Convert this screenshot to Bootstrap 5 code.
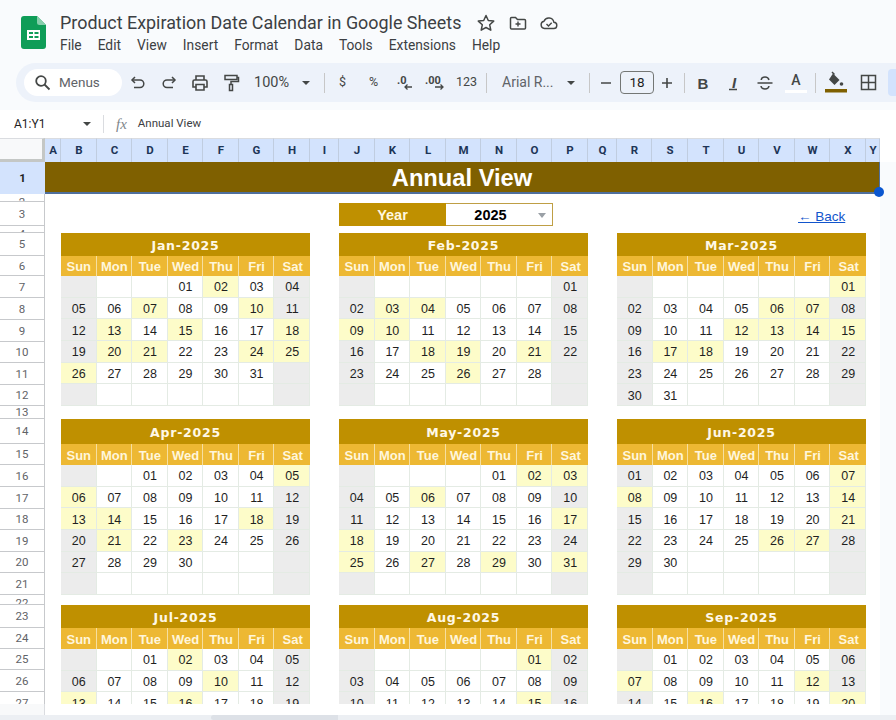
<!DOCTYPE html>
<html lang="en">
<head>
    <meta charset="UTF-8">
    <meta name="viewport" content="width=device-width, initial-scale=1.0">
    <title>Product Expiration Date Calendar in Google Sheets</title>
    <link rel="stylesheet" href="https://cdn.jsdelivr.net/npm/bootstrap@5.3.0/dist/css/bootstrap.min.css">
    <style>
        html, body { width: 896px; height: 720px; overflow: hidden; }
        body { background: #f9fbfd; font-family: Roboto, "Liberation Sans", sans-serif; color: #444746; }

        /* title and menu */
        .app-head { height: 63px; padding-left: 21px; }
        .doc-logo { width: 25px; height: 33px; margin-top: 16px; }
        .doc-info { margin-left: 14px; padding-top: 10px; }
        .doc-title { font-family: Roboto, sans-serif; font-size: 17.9px; line-height: 26px; color: #3c4043; white-space: nowrap; }
        .doc-icon { width: 20px; height: 20px; color: #444746; }
        .doc-icons { gap: 11.5px; margin-left: 15px; }
        .menu-row { font-family: Roboto, sans-serif; font-size: 13.8px; line-height: 18px; color: #3c4043; gap: 16px; white-space: nowrap; }

        /* toolbar */
        .tool-pill { height: 39px; margin-left: 16px; padding-left: 8px; background: #edf2fa; border-radius: 20px 0 0 20px; overflow: hidden; }
        .menu-search { width: 98px; height: 27px; flex: none; background: #fff; border-radius: 14px; font-size: 13.5px; color: #5f6368; padding-left: 10px; gap: 8px; }
        .tb { width: 31px; flex: none; color: #444746; font-size: 12.5px; text-align: center; }
        .tb svg { display: block; margin: auto; }
        .tb-sep { width: 1px; height: 20px; background: #c7c7c7; flex: none; }
        .tb-zoom { width: 42px; margin-left: 8px; font-size: 14.5px; flex: none; }
        .tb-caret { width: 0; height: 0; border-left: 4px solid transparent; border-right: 4px solid transparent; border-top: 4px solid #444746; margin: auto; display: block; }
        .tb-drop { width: 20px; flex: none; }
        .tb-drop-wide { width: 28px; flex: none; }
        .tb-font { width: 55px; margin-left: 15px; font-size: 14px; color: #5f6368; flex: none; white-space: nowrap; }
        .tb-size { width: 34px; height: 23px; border: 1px solid #747775; border-radius: 4px; font-size: 13.5px; line-height: 21px; text-align: center; color: #1f1f1f; flex: none; margin-left: -1px; }
        .tb-plus { width: 26px; flex: none; }
        .ms-sm1 { margin-left: 2px; }
        .ms-sm2 { margin-left: 4px; }
        .ms-sm3 { margin-left: 8px; }
        .tb-more { width: 20px; height: 27px; background: #d3e3fd; border-radius: 4px; margin-left: 4px; flex: none; }

        /* formula bar */
        .formula-bar { height: 28px; margin-top: 8px; background: #fff; }
        .name-box { width: 103px; padding-left: 14px; font-size: 12px; color: #1f1f1f; }
        .name-caret { margin: 0 12px 0 auto; }
        .formula-sep { width: 1px; height: 18px; background: #dadce0; }
        .fx-mark { font-family: "Liberation Serif", serif; font-style: italic; font-size: 15px; color: #80868b; margin: 0 11px 0 12px; }
        .formula-text { font-size: 11.5px; color: #3c4043; }

        /* column headers */
        .col-strip { height: 24px; background: #fff; }
        .corner-box { width: 45px; flex: none; background: #f8f9fa; border-right: 3px solid #c4c7c5; border-bottom: 3px solid #c4c7c5; border-top: 1px solid #dadce0; }
        .col-head { background: #d3e3fd; border-right: 1px solid #c0cde0; border-top: 1px solid #dadce0; padding-left: 1px; font-size: 11.5px; font-weight: 700; color: #1d3557; line-height: 22px; text-align: center; flex: none; }

        /* sheet body */
        .sheet-wrap { height: 542px; overflow: hidden; }
        .row-gutter { width: 45px; flex: none; }
        .row-head { font-size: 11.5px; padding-top: 2px; color: #5f6368; background: #fff; border-bottom: 1px solid #c7c9cc; border-right: 1px solid #c7c9cc; overflow: hidden; display: flex; align-items: center; justify-content: center; }
        .row-head.row-tiny { align-items: flex-start; padding-top: 0; }
        .row-head.row-active { background: #d3e3fd; color: #1f1f1f; font-weight: 700; border-right: none; border-bottom: none; }
        .sheet-main { width: 835px; flex: none; background: #fff; }
        .banner-row { height: 32px; background: #7f6000; border-bottom: 2px solid #4f6f9c; border-right: 1px solid #4f6f9c; color: #fff; font-family: "Liberation Sans", sans-serif; font-weight: 700; font-size: 23.7px; line-height: 32px; text-align: center; }
        .sel-dot { position: absolute; right: -5px; bottom: -5px; width: 10px; height: 10px; border-radius: 50%; background: #0b57d0; z-index: 2; }
        .year-row { height: 39px; padding-top: 9px; font-family: "Liberation Sans", sans-serif; }
        .year-label { width: 107px; height: 23px; margin-left: 294px; background: #bf9000; color: #fff7df; font-weight: 700; font-size: 14.5px; line-height: 25px; text-align: center; }
        .year-value { width: 107px; height: 23px; border: 1px solid #bf9f45; border-left: none; font-weight: 700; font-size: 14.5px; line-height: 23px; color: #000; text-align: center; padding-right: 17px; position: relative; }
        .year-caret { position: absolute; right: 6px; top: 9px; border-left: 4.5px solid transparent; border-right: 4.5px solid transparent; border-top: 5px solid #9aa0a6; }
        .back-link { margin-left: 245px; font-size: 13.5px; line-height: 27px; color: #1155cc; }

        .cal-grid { display: grid; grid-template-columns: repeat(3, 249px); column-gap: 29px; margin-left: 16px; font-family: "Liberation Sans", sans-serif; }
        .month-box { display: grid; grid-template-columns: repeat(7, 1fr); }
        .month-title { grid-column: 1 / -1; padding-top: 3px; background: #bf9000; color: #fff8e6; font-family: "DejaVu Sans", sans-serif; font-weight: 700; font-size: 12.5px; display: flex; align-items: center; justify-content: center; letter-spacing: .75px; }
        .week-cell { background: #edb833; color: #fff6dc; font-weight: 700; font-size: 13px; padding: 2px 0 0 1px; display: flex; align-items: center; justify-content: center; border-right: 1px solid #f6dfa0; }
        .week-cell:nth-child(8) { border-right: none; }
        .day-cell { height: 21.67px; padding: 3px 0 0 1px; display: flex; align-items: center; justify-content: center; font-size: 12.5px; color: #1f1f1f; border-right: 1px solid #e4ebe4; border-bottom: 1px solid #e4ebe4; }
        .day-cell.day-end { background: #ececec; }
        .day-cell.day-hit { background: #fdfcc9; }

        /* strip and scrollbar under the sheet */
        .under-strip { height: 11px; }
        .under-gutter { width: 45px; background: #f8f9fa; border-right: 1px solid #dadce0; flex: none; }
        .under-blank { width: 835px; background: #fff; flex: none; }
        .scroll-track { height: 5px; background: #eceff3; }
        .scroll-thumb { width: 127px; margin-left: 211px; background: #dde1e7; border-radius: 3px 0 0 3px; }
    </style>
</head>
<body>
    <!-- Title and menus -->
    <div class="app-head d-flex">
        <svg class="doc-logo" viewBox="0 0 25 33">
            <path d="M3 0h13l9 9v21a3 3 0 0 1-3 3H3a3 3 0 0 1-3-3V3a3 3 0 0 1 3-3z" fill="#0f9d58"/>
            <path d="M16 0l9 9h-6.500a2.500 2.500 0 0 1-2.500-2.500z" fill="#87ceac"/>
            <path d="M6 14h13v10H6z" fill="#fff"/>
            <path d="M8 16h4v2h-4zM13.500 16h4v2h-4zM8 20h4v2h-4zM13.500 20h4v2h-4z" fill="#0f9d58"/>
        </svg>
        <div class="doc-info">
            <div class="d-flex align-items-center">
                <div class="doc-title">Product Expiration Date Calendar in Google Sheets</div>
                <div class="doc-icons d-flex align-items-center">
                    <svg class="doc-icon" viewBox="0 0 20 20" fill="none" stroke="currentColor" stroke-width="1.500"><path d="M10 2.500l2.300 5 5.400.6-4 3.700 1.100 5.400-4.800-2.700-4.800 2.700 1.100-5.400-4-3.700 5.400-.6z" stroke-linejoin="round"/></svg>
                    <svg class="doc-icon" viewBox="0 0 20 20" fill="none" stroke="currentColor" stroke-width="1.500"><path d="M2.500 5.500a1 1 0 0 1 1-1h4l2 2h7a1 1 0 0 1 1 1v7.500a1 1 0 0 1-1 1h-13a1 1 0 0 1-1-1z"/><path d="M10 8.500v5M7.500 11h5" stroke-width="1.400"/></svg>
                    <svg class="doc-icon" viewBox="0 0 20 20" fill="none" stroke="currentColor" stroke-width="1.400"><path d="M5.500 15.500a3.700 3.700 0 0 1-.5-7.300 5.200 5.200 0 0 1 9.900 1.100 3.100 3.100 0 0 1-.4 6.200z" stroke-linejoin="round"/><path d="M7.500 11l2 2 3.200-3.200"/></svg>
                </div>
            </div>
            <div class="menu-row d-flex">
                <span>File</span><span>Edit</span><span>View</span><span>Insert</span><span>Format</span><span>Data</span><span>Tools</span><span>Extensions</span><span>Help</span>
            </div>
        </div>
    </div>

    <!-- Toolbar -->
    <div class="tool-pill d-flex align-items-center">
        <div class="menu-search d-flex align-items-center">
            <svg width="17" height="17" viewBox="0 0 17 17" fill="none" stroke="#444746" stroke-width="1.800"><circle cx="7" cy="7" r="4.800"/><path d="M10.500 10.500l5 5"/></svg>
            <span>Menus</span>
        </div>
        <div class="tb"><svg width="16" height="16" viewBox="0 0 16 16" fill="none" stroke="#444746" stroke-width="1.500"><path d="M5 2L2 5l3 3"/><path d="M2 5h8a3.800 3.800 0 0 1 0 7.600H4"/></svg></div>
        <div class="tb"><svg width="16" height="16" viewBox="0 0 16 16" fill="none" stroke="#444746" stroke-width="1.500"><path d="M11 2l3 3-3 3"/><path d="M14 5H6a3.800 3.800 0 0 0 0 7.600h6"/></svg></div>
        <div class="tb"><svg width="18" height="18" viewBox="0 0 18 18" fill="none" stroke="#444746" stroke-width="1.600"><path d="M5 6V2h8v4M5 13H2V7.500A1.500 1.500 0 0 1 3.500 6h11A1.500 1.500 0 0 1 16 7.500V13h-3"/><path d="M5 10.500h8V16H5z"/></svg></div>
        <div class="tb"><svg width="18" height="18" viewBox="0 0 18 18" fill="none" stroke="#444746" stroke-width="1.500"><path d="M3 1.500h12v4H3z"/><path d="M15 3.500h1.500v4H9v3"/><path d="M7.500 10.500h3v6h-3z"/></svg></div>
        <div class="tb-zoom">100%</div>
        <div class="tb-drop"><span class="tb-caret"></span></div>
        <div class="tb-sep ms-sm3"></div>
        <div class="tb ms-sm1">$</div>
        <div class="tb">%</div>
        <div class="tb"><svg width="22" height="18" viewBox="0 0 22 18"><text x="3" y="10" font-family="Roboto, sans-serif" font-size="11" font-weight="700" fill="#444746">.0</text><path d="M18 13h-7m2.500-2.500L11 13l2.500 2.500" fill="none" stroke="#444746" stroke-width="1.300"/></svg></div>
        <div class="tb"><svg width="24" height="18" viewBox="0 0 24 18"><text x="1" y="10" font-family="Roboto, sans-serif" font-size="11" font-weight="700" fill="#444746">.00</text><path d="M11 13h8m-2.500-2.500L19 13l-2.500 2.500" fill="none" stroke="#444746" stroke-width="1.300"/></svg></div>
        <div class="tb">123</div>
        <div class="tb-sep ms-sm2"></div>
        <div class="tb-font">Arial R...</div>
        <div class="tb-drop-wide"><span class="tb-caret"></span></div>
        <div class="tb-sep ms-sm2"></div>
        <div class="tb"><svg width="12" height="12" viewBox="0 0 12 12"><path d="M1 6h10" stroke="#444746" stroke-width="1.600"/></svg></div>
        <div class="tb-size">18</div>
        <div class="tb-plus"><svg class="d-block mx-auto" width="12" height="12" viewBox="0 0 12 12"><path d="M1 6h10M6 1v10" stroke="#444746" stroke-width="1.600"/></svg></div>
        <div class="tb-sep ms-sm2"></div>
        <div class="tb ms-sm1"><svg width="16" height="16" viewBox="0 0 16 16"><text x="8" y="14" text-anchor="middle" font-family="Liberation Sans, sans-serif" font-size="15" font-weight="700" fill="#444746">B</text></svg></div>
        <div class="tb"><svg width="16" height="16" viewBox="0 0 16 16"><path d="M3 14.500h8" stroke="#444746" stroke-width="1.400"/><text x="8" y="13" text-anchor="middle" font-family="Liberation Sans, sans-serif" font-size="15" font-style="italic" font-weight="700" fill="#444746">I</text></svg></div>
        <div class="tb"><svg width="18" height="18" viewBox="0 0 18 18" fill="none" stroke="#444746" stroke-width="1.500"><path d="M1.500 9h15"/><path d="M13 6c-.5-2-2-3-4-3s-3.500 1-3.800 3M5 12c.3 2 2 3 4 3s3.700-1 4-3"/></svg></div>
        <div class="tb"><svg width="24" height="20" viewBox="0 0 24 20"><text x="12" y="12" text-anchor="middle" font-family="Roboto, sans-serif" font-size="14" font-weight="500" fill="#444746">A</text><path d="M1 17h22v3H1z" fill="#fff"/></svg></div>
        <div class="tb-sep ms-sm2"></div>
        <div class="tb ms-sm2"><svg width="24" height="24" viewBox="0 0 24 24"><path d="M9 2.500l6.500 6.500-5 5-5.500-5.500z" fill="#444746"/><path d="M8 1l2.500 2.500" stroke="#444746" stroke-width="1.500"/><circle cx="17.500" cy="13" r="1.800" fill="#444746"/><path d="M1 18h22v3.500H1z" fill="#7f6000"/></svg></div>
        <div class="tb ms-sm1"><svg width="17" height="17" viewBox="0 0 17 17" fill="none" stroke="#444746" stroke-width="1.500"><path d="M1.500 1.500h14v14h-14zM8.500 1.500v14M1.500 8.500h14"/></svg></div>
        <div class="tb-more"></div>
    </div>

    <!-- Formula bar -->
    <div class="formula-bar d-flex align-items-center">
        <div class="name-box d-flex align-items-center">A1:Y1<span class="tb-caret name-caret"></span></div>
        <div class="formula-sep"></div>
        <span class="fx-mark">fx</span>
        <span class="formula-text">Annual View</span>
    </div>

    <!-- Column headers -->
    <div class="col-strip d-flex">
        <div class="corner-box"></div>
        <div id="colHeads" class="d-flex"></div>
    </div>

    <!-- Sheet -->
    <div class="sheet-wrap d-flex">
        <div id="rowHeads" class="row-gutter"></div>
        <div class="sheet-main">
            <div class="banner-row position-relative">Annual View<span class="sel-dot"></span></div>
            <div class="year-row d-flex">
                <div class="year-label">Year</div>
                <div class="year-value">2025<span class="year-caret"></span></div>
                <a class="back-link" href="#">← Back</a>
            </div>
            <div id="calGrid" class="cal-grid"></div>
        </div>
    </div>

    <!-- Strip and horizontal scrollbar -->
    <div class="under-strip d-flex">
        <div class="under-gutter"></div>
        <div class="under-blank"></div>
    </div>
    <div class="scroll-track d-flex">
        <div class="scroll-thumb"></div>
    </div>

    <script>
        const COLS = [['A',16],['B',36],['C',35],['D',36],['E',35],['F',36],['G',35],['H',36],['I',29],['J',36],['K',35],['L',36],['M',35],['N',36],['O',35],['P',36],['Q',29],['R',35],['S',36],['T',36],['U',35],['V',36],['W',35],['X',36],['Y',14]];
        const ROWS = [32,8,24,7,23,20,22,22,22,21,22,21,13,25,21,22,22,21,22,21,22,10,23,21,21,22,22];
        const WEEK = ['Sun','Mon','Tue','Wed','Thu','Fri','Sat'];

        // title height, week height, gap under the band
        const BANDS = [[23,20,13],[25,21,10],[23,21,0]];
        const MONTHS = [
            ['Jan',3,31,[2,7,10,13,15,18,20,21,24,25,26]],
            ['Feb',6,28,[3,4,9,10,18,19,21,26]],
            ['Mar',6,31,[1,6,7,12,13,14,15,17,18]],
            ['Apr',2,30,[5,6,13,14,18,21,23]],
            ['May',4,31,[2,3,6,17,18,25,27,29,31]],
            ['Jun',0,30,[7,8,14,21,26,27]],
            ['Jul',2,31,[2,10,13,16]],
            ['Aug',5,31,[1,15]],
            ['Sep',1,30,[7,12,16,20]]
        ];

        const colHeads = document.getElementById('colHeads');
        COLS.forEach(([name, width]) => {
            const head = document.createElement('div');
            head.className = 'col-head';
            head.style.width = width + 'px';
            head.textContent = name;
            colHeads.appendChild(head);
        });

        const rowHeads = document.getElementById('rowHeads');
        ROWS.forEach((height, i) => {
            const head = document.createElement('div');
            head.className = 'row-head';
            if (i === 0) head.classList.add('row-active');
            if (height <= 10) head.classList.add('row-tiny');
            head.style.height = height + 'px';
            head.textContent = i + 1;
            rowHeads.appendChild(head);
        });

        const calGrid = document.getElementById('calGrid');
        MONTHS.forEach(([name, first, days, hits], m) => {
            const [titleH, weekH, gap] = BANDS[Math.floor(m / 3)];
            const box = document.createElement('div');
            box.className = 'month-box';
            box.style.marginBottom = gap + 'px';

            const title = document.createElement('div');
            title.className = 'month-title';
            title.style.height = titleH + 'px';
            title.textContent = name + '-2025';
            box.appendChild(title);

            WEEK.forEach((w) => {
                const cell = document.createElement('div');
                cell.className = 'week-cell';
                cell.style.height = weekH + 'px';
                cell.textContent = w;
                box.appendChild(cell);
            });

            for (let i = 0; i < 42; i++) {
                const day = i - first + 1;
                const valid = day >= 1 && day <= days;
                const cell = document.createElement('div');
                cell.className = 'day-cell';
                if (valid && hits.includes(day)) cell.classList.add('day-hit');
                else if (i % 7 === 0 || i % 7 === 6) cell.classList.add('day-end');
                if (valid) cell.textContent = String(day).padStart(2, '0');
                box.appendChild(cell);
            }
            calGrid.appendChild(box);
        });
    </script>
    <script src="https://cdn.jsdelivr.net/npm/bootstrap@5.3.0/dist/js/bootstrap.bundle.min.js"></script>
</body>
</html>
